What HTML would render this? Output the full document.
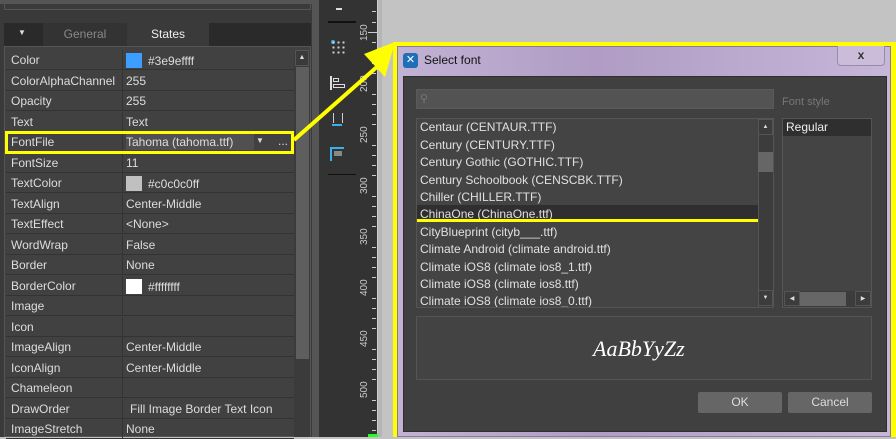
<!DOCTYPE html>
<html><head><style>
*{margin:0;padding:0;box-sizing:border-box}
body{width:896px;height:437px;overflow:hidden;background:#c3c3c3;font-family:"Liberation Sans",sans-serif;font-size:12px;color:#ddd;position:relative}
.a{position:absolute}
.row{position:absolute;left:6px;width:288px;height:20px;border-bottom:1px solid #333}
.row .l{position:absolute;left:5px;top:3px}
.row .v{position:absolute;left:120px;top:3px}
.row .sep{position:absolute;left:116px;top:0;width:1px;height:20px;background:#333}
.sw{display:inline-block;width:16px;height:15px;vertical-align:-3px;margin-right:6px}
.li{position:absolute;left:420px;height:17px;line-height:17px;font-size:12px;color:#e0e0e0}
.tk{position:absolute;left:372px;width:4px;height:1px;background:#ccc}
.rn{position:absolute;left:359px;font-size:10px;color:#ccc;transform:rotate(-90deg);transform-origin:left top}
</style></head><body>
<div class="a" style="left:0;top:0;width:312px;height:437px;background:#3a3a3a"></div>
<div class="a" style="left:0;top:0;width:312px;height:4px;background:#555"></div>
<div class="a" style="left:4px;top:4px;width:307px;height:6px;border:1px solid #555;border-top:0;background:#3b3b3b"></div>
<div class="a" style="left:4px;top:23px;width:307px;height:23px;background:#2a2a2a"></div>
<div class="a" style="left:18px;top:28px;font-size:8px;color:#ddd">▼</div>
<div class="a" style="left:43px;top:23px;width:84px;height:23px;background:#333;color:#888;text-align:center;line-height:23px">General</div>
<div class="a" style="left:127px;top:23px;width:82px;height:23px;background:#3a3a3a;color:#eee;text-align:center;line-height:23px">States</div>
<div class="a" style="left:4px;top:46px;width:307px;height:391px;background:#414141;border:1px solid #555"></div>
<div class="a" style="left:294px;top:50px;width:16px;height:387px;background:#3b3b3b"></div>
<div class="a" style="left:295px;top:50px;width:14px;height:16px;background:#3a3a3a;border:1px solid #555;font-size:7px;text-align:center;line-height:14px">▲</div>
<div class="a" style="left:296px;top:67px;width:13px;height:292px;background:#5e5e5e"></div>

<div class="row" style="top:50px"><div class="sep"></div><span class="l">Color</span><span class="v"><span class="sw" style="background:#3e9eff"></span>#3e9effff</span></div>
<div class="row" style="top:70.5px"><div class="sep"></div><span class="l">ColorAlphaChannel</span><span class="v">255</span></div>
<div class="row" style="top:91px"><div class="sep"></div><span class="l">Opacity</span><span class="v">255</span></div>
<div class="row" style="top:111.5px"><div class="sep"></div><span class="l">Text</span><span class="v">Text</span></div>
<div class="row" style="top:132px"><div class="sep"></div><span class="l">FontFile</span><span class="a" style="left:120px;top:2px;width:128px;height:16px;background:#505050"></span><span class="v">Tahoma (tahoma.ttf)</span><span class="a" style="left:250px;top:4px;font-size:8px">▼</span><span class="a" style="left:272px;top:2px">...</span></div>
<div class="row" style="top:152.5px"><div class="sep"></div><span class="l">FontSize</span><span class="v">11</span></div>
<div class="row" style="top:173px"><div class="sep"></div><span class="l">TextColor</span><span class="v"><span class="sw" style="background:#c0c0c0"></span>#c0c0c0ff</span></div>
<div class="row" style="top:193.5px"><div class="sep"></div><span class="l">TextAlign</span><span class="v">Center-Middle</span></div>
<div class="row" style="top:214px"><div class="sep"></div><span class="l">TextEffect</span><span class="v">&lt;None&gt;</span></div>
<div class="row" style="top:234.5px"><div class="sep"></div><span class="l">WordWrap</span><span class="v">False</span></div>
<div class="row" style="top:255px"><div class="sep"></div><span class="l">Border</span><span class="v">None</span></div>
<div class="row" style="top:275.5px"><div class="sep"></div><span class="l">BorderColor</span><span class="v"><span class="sw" style="background:#fff"></span>#ffffffff</span></div>
<div class="row" style="top:296px"><div class="sep"></div><span class="l">Image</span></div>
<div class="row" style="top:316.5px"><div class="sep"></div><span class="l">Icon</span></div>
<div class="row" style="top:337px"><div class="sep"></div><span class="l">ImageAlign</span><span class="v">Center-Middle</span></div>
<div class="row" style="top:357.5px"><div class="sep"></div><span class="l">IconAlign</span><span class="v">Center-Middle</span></div>
<div class="row" style="top:378px"><div class="sep"></div><span class="l">Chameleon</span></div>
<div class="row" style="top:398.5px"><div class="sep"></div><span class="l">DrawOrder</span><span class="v" style="left:124px">Fill Image Border Text Icon</span></div>
<div class="row" style="top:419px"><div class="sep"></div><span class="l">ImageStretch</span><span class="v">None</span></div>
<div class="a" style="left:5px;top:131px;width:289px;height:23px;border:3px solid #ffff00"></div>

<div class="a" style="left:312px;top:0;width:7px;height:437px;background:#555"></div>
<div class="a" style="left:319px;top:0;width:59px;height:437px;background:#333"></div>
<div class="a" style="left:377px;top:0;width:1px;height:437px;background:#ccc"></div>
<div class="a" style="left:378px;top:0;width:4px;height:437px;background:#b5b5b5"></div>
<div class="a" style="left:336px;top:2px;width:6px;height:8px;border-bottom:2px solid #ddd;border-left:0"></div>
<div class="a" style="left:328px;top:21px;width:28px;height:2px;background:#111"></div>
<div class="a" style="left:331px;top:40px;width:4px;height:4px;border-radius:2px;background:#3ab0e8"></div>
<div class="a" style="left:331px;top:40px;width:15px;height:15px;background:radial-gradient(circle,#ccc 1px,transparent 1.3px) 0 0/5px 5px"></div>
<div class="a" style="left:330px;top:76px;width:2px;height:14px;background:#ddd"></div>
<div class="a" style="left:333px;top:78px;width:6px;height:4px;border:1px solid #ddd"></div>
<div class="a" style="left:333px;top:84px;width:12px;height:4px;border:1px solid #ddd"></div>
<div class="a" style="left:333px;top:113px;width:10px;height:10px;border:1px solid #ccc;border-top:0;border-bottom:0"></div>
<div class="a" style="left:332px;top:124px;width:10px;height:2px;background:#3ab0e8"></div>
<div class="a" style="left:330px;top:147px;width:2px;height:14px;background:#3ab0e8"></div>
<div class="a" style="left:330px;top:147px;width:14px;height:2px;background:#3ab0e8"></div>
<div class="a" style="left:334px;top:151px;width:8px;height:5px;background:#888"></div>
<div class="a" style="left:328px;top:174px;width:28px;height:1px;background:#111"></div>
<div class="tk" style="top:11px"></div><div class="tk" style="top:22px"></div><div class="tk" style="top:42px"></div><div class="tk" style="top:52px"></div><div class="tk" style="top:63px"></div><div class="tk" style="top:73px"></div><div class="tk" style="top:94px"></div><div class="tk" style="top:104px"></div><div class="tk" style="top:114px"></div><div class="tk" style="top:124px"></div><div class="tk" style="top:145px"></div><div class="tk" style="top:155px"></div><div class="tk" style="top:165px"></div><div class="tk" style="top:175px"></div><div class="tk" style="top:196px"></div><div class="tk" style="top:206px"></div><div class="tk" style="top:216px"></div><div class="tk" style="top:226px"></div><div class="tk" style="top:247px"></div><div class="tk" style="top:257px"></div><div class="tk" style="top:267px"></div><div class="tk" style="top:277px"></div><div class="tk" style="top:298px"></div><div class="tk" style="top:308px"></div><div class="tk" style="top:318px"></div><div class="tk" style="top:328px"></div><div class="tk" style="top:349px"></div><div class="tk" style="top:359px"></div><div class="tk" style="top:369px"></div><div class="tk" style="top:379px"></div><div class="tk" style="top:400px"></div><div class="tk" style="top:410px"></div><div class="tk" style="top:420px"></div><div class="tk" style="top:430px"></div>
<div class="a" style="left:368px;top:32px;width:10px;height:1px;background:#ccc"></div>
<div class="rn" style="top:41px">150</div><div class="rn" style="top:92px">200</div><div class="rn" style="top:143px">250</div><div class="rn" style="top:194px">300</div><div class="rn" style="top:245px">350</div><div class="rn" style="top:296px">400</div><div class="rn" style="top:347px">450</div><div class="rn" style="top:398px">500</div>
<div class="a" style="left:368px;top:434px;width:10px;height:3px;background:#2f2"></div>

<div class="a" style="left:393px;top:42px;width:503px;height:395px;background:#ffff00"></div>
<div class="a" style="left:397px;top:46px;width:494px;height:391px;background:linear-gradient(90deg,#c2b2d4,#b09cc4 40%,#c6b6d8);border:1px solid #8a7a9a"></div>
<div class="a" style="left:403px;top:53px;width:15px;height:15px;border-radius:3px;background:#1d6fb8;color:#fff;font-size:11px;line-height:15px;text-align:center">✕</div>
<div class="a" style="left:424px;top:53px;font-size:12px;color:#111">Select font</div>
<div class="a" style="left:837px;top:46px;width:48px;height:20px;border:1px solid #9a8aaa;border-top:0;border-radius:0 0 4px 4px;background:#cbbcd9;text-align:center;color:#333;font-weight:bold;font-size:12px;line-height:18px">x</div>
<div class="a" style="left:403px;top:76px;width:484px;height:356px;background:#404040;border:1px solid #2f2f2f"></div>
<div class="a" style="left:416px;top:89px;width:358px;height:20px;background:#535353;border:1px solid #5a5a5a"></div>
<div class="a" style="left:420px;top:92px;font-size:11px;color:#777">&#9906;</div>
<div class="a" style="left:782px;top:96px;color:#777;font-size:11px">Font style</div>
<div class="a" style="left:416px;top:118px;width:358px;height:190px;background:#444;border:1px solid #555"></div>
<div class="a" style="left:417px;top:205px;width:341px;height:17px;background:#2f2f2f"></div>
<div class="li" style="top:119px">Centaur (CENTAUR.TTF)</div>
<div class="li" style="top:136.5px">Century (CENTURY.TTF)</div>
<div class="li" style="top:154px">Century Gothic (GOTHIC.TTF)</div>
<div class="li" style="top:171.5px">Century Schoolbook (CENSCBK.TTF)</div>
<div class="li" style="top:189px">Chiller (CHILLER.TTF)</div>
<div class="li" style="top:206px">ChinaOne (ChinaOne.ttf)</div>
<div class="li" style="top:223.5px">CityBlueprint (cityb___.ttf)</div>
<div class="li" style="top:241px">Climate Android (climate android.ttf)</div>
<div class="li" style="top:258.5px">Climate iOS8 (climate ios8_1.ttf)</div>
<div class="li" style="top:276px">Climate iOS8 (climate ios8.ttf)</div>
<div class="li" style="top:293px;height:14px;overflow:hidden">Climate iOS8 (climate ios8_0.ttf)</div>
<div class="a" style="left:417px;top:219px;width:343px;height:3px;background:#ffff00"></div>
<div class="a" style="left:758px;top:119px;width:15px;height:188px;background:#3c3c3c;border-left:1px solid #555"></div>
<div class="a" style="left:758px;top:119px;width:15px;height:16px;border:1px solid #555;font-size:6px;text-align:center;line-height:14px">▲</div>
<div class="a" style="left:758px;top:152px;width:15px;height:20px;background:#666"></div>
<div class="a" style="left:758px;top:290px;width:15px;height:16px;border:1px solid #555;font-size:6px;text-align:center;line-height:14px">▼</div>
<div class="a" style="left:782px;top:118px;width:90px;height:190px;background:#444;border:1px solid #555"></div>
<div class="a" style="left:783px;top:119px;width:88px;height:17px;background:#2f2f2f;color:#eee;padding-left:3px;line-height:17px">Regular</div>
<div class="a" style="left:783px;top:291px;width:88px;height:16px;background:#3c3c3c"></div>
<div class="a" style="left:784px;top:291px;width:16px;height:15px;border:1px solid #555;font-size:6px;text-align:center;line-height:14px">◀</div>
<div class="a" style="left:800px;top:292px;width:46px;height:14px;background:#666"></div>
<div class="a" style="left:855px;top:291px;width:16px;height:15px;border:1px solid #555;font-size:6px;text-align:center;line-height:14px">▶</div>
<div class="a" style="left:416px;top:316px;width:456px;height:64px;background:#434343;border:1px solid #555"></div>
<div class="a" style="left:593px;top:336px;font-family:'Liberation Serif',serif;font-style:italic;font-size:22px;color:#fff">AaBbYyZz</div>
<div class="a" style="left:698px;top:392px;width:84px;height:21px;background:#666;border-radius:2px;text-align:center;line-height:21px;color:#ddd">OK</div>
<div class="a" style="left:788px;top:392px;width:84px;height:21px;background:#666;border-radius:2px;text-align:center;line-height:21px;color:#ddd">Cancel</div>

<svg class="a" style="left:0;top:0" width="896" height="437">
<line x1="294" y1="140" x2="378" y2="66" stroke="#ffff00" stroke-width="4"/>
<polygon points="395,42 364,54 385,77" fill="#ffff00"/>
</svg>
</body></html>
